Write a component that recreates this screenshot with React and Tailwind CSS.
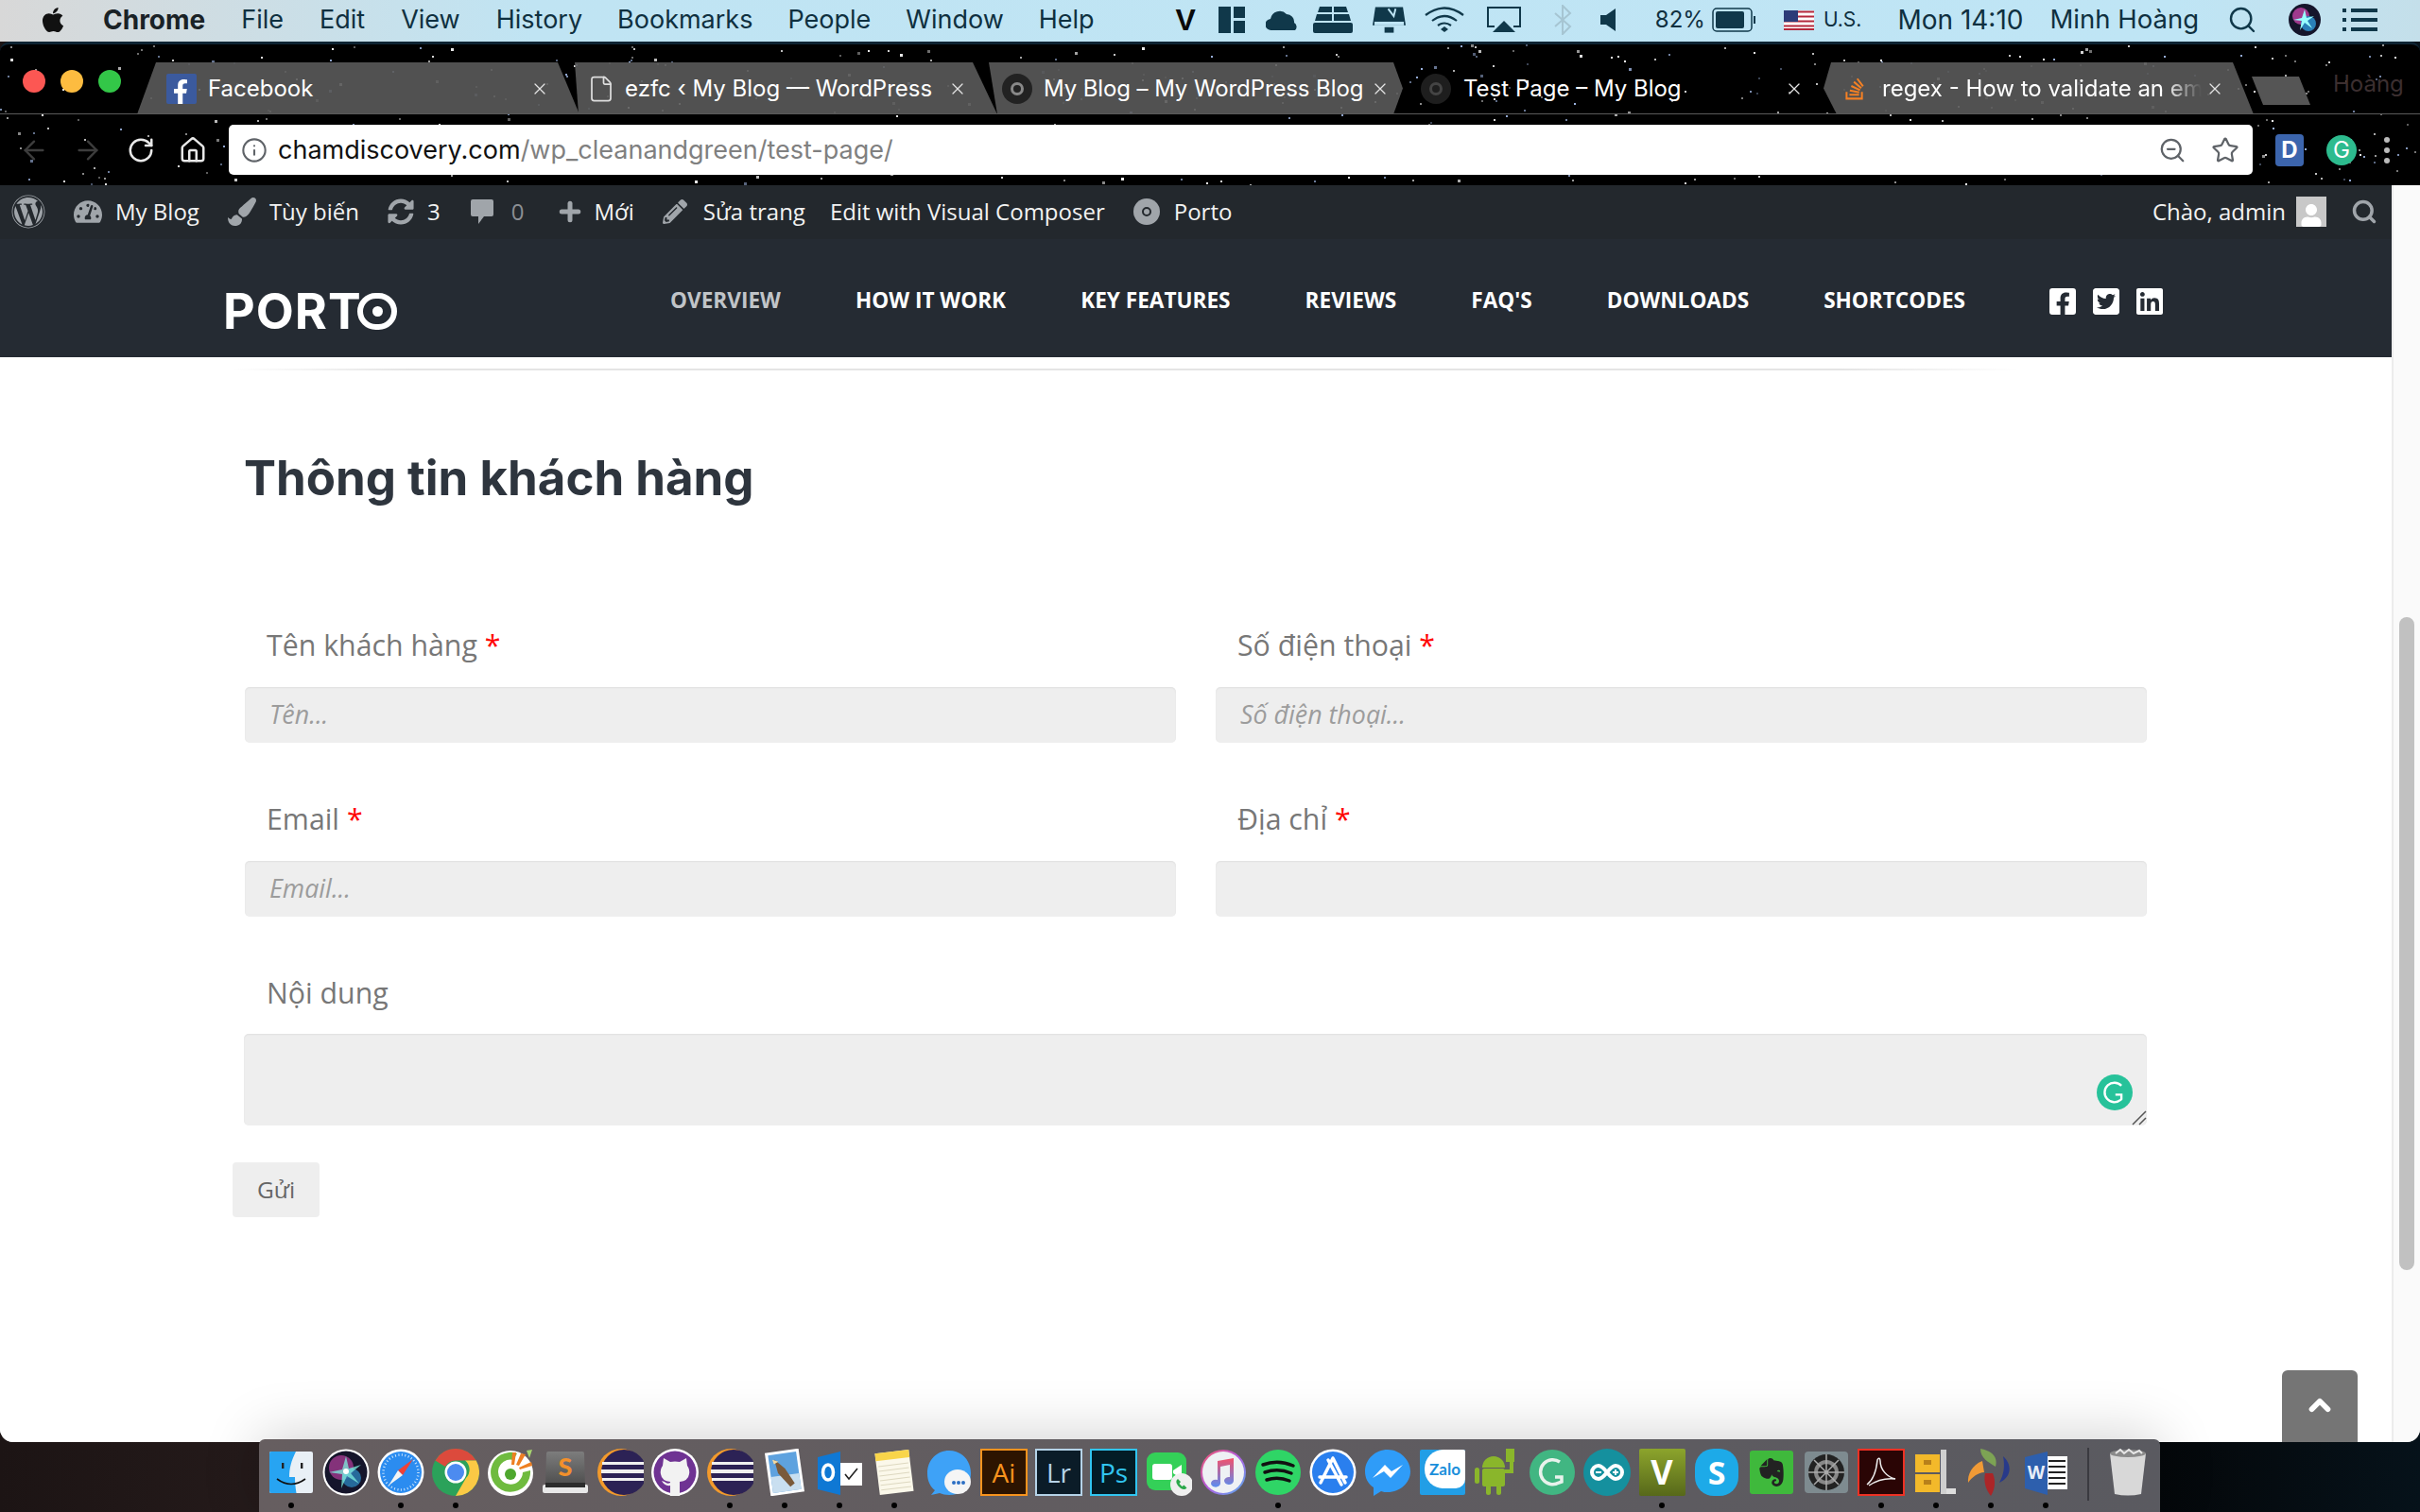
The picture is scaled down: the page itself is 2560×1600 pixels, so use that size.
import React from "react";
import { ArrowLeft, ArrowRight, RotateCw, Home, Info, ZoomOut, Star, File, X, Search, ChevronUp, Plus } from "lucide-react";
import { FaFacebookSquare, FaTwitterSquare, FaLinkedin, FaWordpress, FaApple, FaTachometerAlt, FaPaintBrush, FaSyncAlt, FaPencilAlt, FaFacebookF, FaStackOverflow, FaUser, FaEvernote } from "react-icons/fa";

const stars = (() => {
  const out = [];
  let s = 12345;
  const r = () => { s = (s * 1103515245 + 12345) & 0x7fffffff; return s / 0x7fffffff; };
  for (let i = 0; i < 520; i++) {
    out.push({ x: Math.floor(r() * 2560), y: Math.floor(r() * 149), w: r() > 0.85 ? 3 : 2, o: 0.35 + r() * 0.65, b: r() > 0.7 });
  }
  return out;
})();

const Rim = ({ fill = "#fff", r = 24 }) => <circle cx="25" cy="25" r={r} fill={fill} />;
const S = ({ children }) => <svg viewBox="0 0 50 50" className="h-[50px] w-[50px]">{children}</svg>;

const dockIcons = [
  { k: "finder", run: 1, el: <S><rect x="2" y="3" width="46" height="44" rx="2" fill="#e9f0f6" /><path d="M2 5a2 2 0 012-2h26c-5 10-7 18-7 27h6c0 6 .5 11 1.5 17H4a2 2 0 01-2-2z" fill="#27a4f2" /><rect x="15" y="15" width="2.4" height="6" fill="#222" /><rect x="35" y="15" width="2.4" height="6" fill="#222" /><path d="M10 32q15 11 30 0" fill="none" stroke="#111" strokeWidth="1.6" /></S> },
  { k: "siri", el: <S><Rim r={24.5} /><circle cx="25" cy="25" r="22.5" fill="#15152b" /><circle cx="20" cy="20" r="13" fill="#a03a8e" opacity=".8" /><circle cx="31" cy="31" r="10" fill="#2a7fb8" opacity=".8" /><path d="M25 8l3 13 13-4-11 9 9 11-13-8-6 13 1-15-14-2 14-3z" fill="#7ff0e0" opacity=".75" /><circle cx="25" cy="24" r="3" fill="#fff" /></S> },
  { k: "safari", run: 1, el: <S><Rim r={24.5} /><circle cx="25" cy="25" r="22" fill="#2b8cf0" /><circle cx="25" cy="25" r="18.5" fill="none" stroke="#cfe6fb" strokeWidth="2.5" strokeDasharray="1 2.5" /><path d="M38 11L22 23l5 5z" fill="#ef4136" /><path d="M12 39l10-16 5 5z" fill="#f4f4f4" /></S> },
  { k: "chrome", run: 1, el: <S><circle cx="25" cy="25" r="25" fill="#2ba25a" /><path d="M25 0a25 25 0 0121.7 12.5H25a12.5 12.5 0 00-11 6.5L3.4 12.4A25 25 0 0125 0z" fill="#dc4a3c" /><path d="M46.7 12.5A25 25 0 0125 50l11-19a12.5 12.5 0 00-1-18.5z" fill="#fbc945" /><circle cx="25" cy="25" r="11.5" fill="#fff" /><circle cx="25" cy="25" r="9" fill="#4c8bf0" /></S> },
  { k: "coccoc", el: <S><circle cx="25" cy="26" r="24" fill="#fff" /><path d="M32 5A21 21 0 1046 23l-8 2a13 13 0 11-10-13z" fill="#6fbb3f" /><circle cx="25" cy="27" r="9" fill="#fff" /><circle cx="25" cy="27" r="6" fill="#4ea72e" /><path d="M27 4l4 0-2 13-3 0z" fill="#ee7f22" /><path d="M36 5l5 1-7 12-3-1z" fill="#ee7f22" /><path d="M47 14l1 4-13 4-1-2z" fill="#ee7f22" /><path d="M42 2l6-1-3 9z" fill="#a7d46f" /></S> },
  { k: "sublime", el: <S><defs><linearGradient id="sb" x1="0" y1="0" x2="0" y2="1"><stop offset="0" stopColor="#7d7d7d" /><stop offset="1" stopColor="#4a4a4a" /></linearGradient></defs><rect x="1" y="38" width="48" height="9" rx="2" fill="#e8e8e8" /><path d="M5 5a2 2 0 012-2h36a2 2 0 012 2l1 36H4z" fill="url(#sb)" /><rect x="4" y="36" width="42" height="5" fill="#2c2c2c" /><text x="25" y="29" textAnchor="middle" fontFamily="Lato, sans-serif" fontWeight="900" fontSize="27" fill="#f3902b">S</text></S> },
  { k: "eclipse", el: <S><circle cx="26" cy="25" r="25" fill="#f39a2b" /><circle cx="29" cy="25" r="24" fill="#2c2255" /><path d="M6 14h46v3H6zM5 22h47v4H5zM6 31h46v3H6z" fill="#f0f0f0" /></S> },
  { k: "github", el: <S><Rim r={25} /><circle cx="25" cy="25" r="22.5" fill="#6f3393" /><path d="M13 10l7 4q5-1 10 0l7-4 1 8q3 4 2 9-1 7-10 8v15H20V39q-6 1-9-5l3 1q3 3 6 1v-1q-9-1-10-8-1-5 2-9z" fill="#f2f2f2" /></S> },
  { k: "eclipse2", run: 1, el: <S><circle cx="26" cy="25" r="25" fill="#f39a2b" /><circle cx="29" cy="25" r="24" fill="#2c2255" /><path d="M6 14h46v3H6zM5 22h47v4H5zM6 31h46v3H6z" fill="#f0f0f0" /></S> },
  { k: "mail", run: 1, el: <S><g transform="rotate(-8 25 25)"><rect x="7" y="2" width="36" height="46" fill="#fff" /><rect x="10" y="5" width="30" height="40" fill="#5ea2df" /><rect x="10" y="28" width="30" height="17" fill="#c9dff0" /><path d="M16 10l10 11 8 17-5 3-11-16z" fill="#7a5a3b" /><path d="M20 13l-6-3 1 5z" fill="#f4d9a0" /></g></S> },
  { k: "outlook", run: 1, el: <S><rect x="26" y="15" width="23" height="24" fill="#fff" /><path d="M31 27l4 5 9-11" fill="none" stroke="#222" strokeWidth="1.6" /><path d="M2 9l24-6v46L2 43z" fill="#0f78d4" /><ellipse cx="13" cy="25" rx="5.5" ry="8" fill="none" stroke="#fff" strokeWidth="3.5" /></S> },
  { k: "notes", run: 1, el: <S><g transform="rotate(-7 25 25)"><rect x="7" y="3" width="36" height="44" fill="#fbf8ea" /><rect x="7" y="3" width="36" height="8" fill="#f9d54a" /><path d="M9 17h32M9 22h32M9 27h32M9 32h32M9 37h32M9 42h32" stroke="#ddd8c0" strokeWidth="1" /></g></S> },
  { k: "messages", el: <S><path d="M25 2C12 2 2 12 2 26c0 8 3 14 8 18l-4 5 9-2c3 1 6 2 10 2 14 0 23-10 23-23S39 2 25 2z" fill="#3ea2f7" /><ellipse cx="34" cy="35" rx="14" ry="13" fill="#f5f5f5" /><path d="M28 36a2 2 0 104 0 2 2 0 10-4 0M33 36a2 2 0 104 0 2 2 0 10-4 0M38 36a2 2 0 104 0 2 2 0 10-4 0" fill="#2c6fc4" /></S> },
  { k: "ai", el: <div className="flex h-[50px] w-[50px] items-center justify-center border-[2px] border-[#f7931e] bg-[#2d1400] font-['Open_Sans',sans-serif] text-[28px] text-[#f7931e]">Ai</div> },
  { k: "lr", el: <div className="flex h-[50px] w-[50px] items-center justify-center border-[2px] border-[#b5d3e8] bg-[#0b1c28] font-['Open_Sans',sans-serif] text-[28px] text-[#b5d3e8]">Lr</div> },
  { k: "ps", el: <div className="flex h-[50px] w-[50px] items-center justify-center border-[2px] border-[#31c5f0] bg-[#031c26] font-['Open_Sans',sans-serif] text-[28px] text-[#31c5f0]">Ps</div> },
  { k: "facetime", el: <S><rect x="2" y="4" width="42" height="40" rx="9" fill="#34d058" /><rect x="8" y="16" width="21" height="17" rx="3" fill="#fff" /><path d="M30 23l9-6v15l-9-6z" fill="#fff" /><circle cx="39" cy="38" r="12" fill="#efefef" /><path d="M35 32l3 3-1.5 2 3 3 2-1.5 3 3c-3 3-6 1-8-1s-5-6-1.5-8.5z" fill="#2ba84a" /></S> },
  { k: "itunes", el: <S><defs><linearGradient id="it" x1="0" y1="0" x2="1" y2="1"><stop offset="0" stopColor="#f5566a" /><stop offset=".5" stopColor="#b25ce0" /><stop offset="1" stopColor="#4fb4f0" /></linearGradient><linearGradient id="it2" x1="0" y1="0" x2="0" y2="1"><stop offset="0" stopColor="#f3516c" /><stop offset="1" stopColor="#5a8cf0" /></linearGradient></defs><circle cx="25" cy="25" r="24" fill="url(#it)" /><circle cx="25" cy="25" r="22" fill="#eef1f4" /><path d="M19 13l17-3v24a5 4 0 11-4-4V17l-10 2v18a5 4 0 11-3-4z" fill="url(#it2)" /></S> },
  { k: "spotify", run: 1, el: <S><circle cx="25" cy="25" r="24" fill="#2fd566" /><path d="M9 17q16-6 32 1M11 25q14-5 28 1M13 33q12-4 24 1" fill="none" stroke="#111" strokeWidth="3.5" strokeLinecap="round" /></S> },
  { k: "appstore", el: <S><Rim r={24.5} /><circle cx="25" cy="25" r="22" fill="#2a7fee" /><path d="M25 10l-13 26M25 10l13 26M20 12l14 26M11 30h28" stroke="#fff" strokeWidth="3.5" strokeLinecap="round" fill="none" /></S> },
  { k: "messenger", el: <S><path d="M25 1C12 1 1 11 1 24c0 7 3 13 9 17v9l8-5c2 1 5 1 7 1 13 0 24-10 24-22S38 1 25 1z" fill="#2f9cf8" /><path d="M9 31l13-14 7 7 12-7-13 14-7-7z" fill="#fff" /></S> },
  { k: "zalo", el: <div className="relative h-[48px] w-[48px] rounded-[2px] bg-[#229ee6]"><div className="absolute left-[5px] top-0 flex h-[41px] w-[43px] items-center justify-center rounded-bl-[20px] rounded-tl-[20px] rounded-tr-[2px] rounded-br-[10px] bg-white font-['Lato',sans-serif] text-[17px] font-bold text-[#1b8fdb]">Zalo</div></div> },
  { k: "android", el: <S><rect x="1" y="20" width="5" height="17" rx="2.5" fill="#8ab62b" /><path d="M9 20a12 12 0 0124 0z" fill="#8ab62b" /><rect x="9" y="21" width="24" height="19" rx="2" fill="#8ab62b" /><rect x="13" y="38" width="5" height="11" rx="2.5" fill="#8ab62b" /><rect x="24" y="38" width="5" height="11" rx="2.5" fill="#8ab62b" /><path d="M33 24h7V12" stroke="#8ab62b" strokeWidth="4" fill="none" /><rect x="34" y="0" width="9" height="14" fill="#8ab62b" /></S> },
  { k: "grammarly", el: <S><circle cx="25" cy="25" r="24" fill="#41b682" /><path d="M33 14a13 13 0 10-1 22l3-1v-5h-7" fill="none" stroke="#e8f2ec" strokeWidth="3.5" /></S> },
  { k: "arduino", el: <S><circle cx="25" cy="25" r="25" fill="#15909e" /><path d="M16 18a7 7 0 000 14c7 0 11-14 18-14a7 7 0 010 14c-7 0-11-14-18-14z" fill="none" stroke="#fff" strokeWidth="4" /><path d="M13 25h6M31 25h6M34 22v6" stroke="#fff" strokeWidth="1.8" /></S> },
  { k: "vim", run: 1, el: <div className="flex h-[50px] w-[49px] items-center justify-center rounded-[2px] bg-[linear-gradient(180deg,#8ca42c,#57681a)] font-['Open_Sans',sans-serif] text-[36px] font-bold text-white">V</div> },
  { k: "skype", el: <div className="flex h-[50px] w-[46px] items-center justify-center rounded-[20px] bg-[#1daae8] font-['Open_Sans',sans-serif] text-[34px] font-bold text-white">S</div> },
  { k: "evernote", el: <div className="flex h-[46px] w-[46px] items-center justify-center rounded-[3px] bg-[#3fb93c] text-[34px] text-[#222]"><FaEvernote /></div> },
  { k: "sysprefs", el: <S><rect x="2" y="3" width="46" height="44" rx="4" fill="#7e8b90" /><circle cx="25" cy="25" r="19" fill="#222" /><circle cx="25" cy="25" r="13" fill="#888" /><circle cx="25" cy="25" r="9" fill="#222" /><path d="M25 6v38M6 25h38M12 12l26 26M38 12L12 38" stroke="#aaa" strokeWidth="1.5" /></S> },
  { k: "acrobat", run: 1, el: <S><rect x="1" y="1" width="48" height="48" fill="#2a0505" stroke="#ee3124" strokeWidth="2" /><path d="M10 38c8-6 10-16 11-26 1-3 3-2 3 1 0 9 7 17 16 19-9-1-19 1-28 7" fill="none" stroke="#eee" strokeWidth="1.5" /></S> },
  { k: "archive", run: 1, el: <S><rect x="3" y="6" width="26" height="19" fill="#f3b92a" /><rect x="3" y="27" width="26" height="19" fill="#f3b92a" /><rect x="12" y="12" width="8" height="5" fill="#b8801a" /><rect x="12" y="33" width="8" height="5" fill="#b8801a" /><rect x="30" y="1" width="6" height="47" fill="#cfcfcf" /><rect x="36" y="42" width="10" height="6" fill="#ddd" /></S> },
  { k: "stack", run: 1, el: <S><path d="M14 0c12 2 19 9 16 19C22 14 14 10 14 0z" fill="#7da354" /><path d="M38 8c10 9 9 22-4 28 5-9 6-18 4-28z" fill="#283a8a" /><path d="M16 13C5 17 0 28 1 36c4-6 11-11 17-11z" fill="#f09a36" /><path d="M19 26c-2 9 1 18 6 24 5-8 5-17 2-24z" fill="#ab2527" /></S> },
  { k: "word", run: 1, el: <S><rect x="25" y="8" width="23" height="35" fill="#fff" /><path d="M28 13h18M28 19h18M28 25h18M28 31h18M28 37h18" stroke="#222" strokeWidth="2" /><path d="M3 9l24-6v46L3 42z" fill="#2d5fad" /><text x="15" y="32" textAnchor="middle" fontFamily="Open Sans, sans-serif" fontWeight="700" fontSize="19" fill="#e8eef8">W</text></S> },
];

function Tab({ widthCls, shapeCls, fill = "bg-[#5a5a5a]/90", icon, title, closeCls, titleCls }) {
  return (
    <div className={`relative flex h-full items-center text-[24px] text-white ${widthCls} ${shapeCls} ${fill}`}>
      {icon}
      <span className={`overflow-hidden whitespace-nowrap ${titleCls}`}>{title}</span>
      <X size={20} strokeWidth={1.5} className={`shrink-0 text-[#e4e4e4] ${closeCls}`} />
    </div>
  );
}

function AdminItem({ icon, children, cls = "" }) {
  return <div className={`flex items-center ${cls}`}>{icon}{children}</div>;
}

function Field({ label, required, placeholder }) {
  return (
    <div>
      <div className="h-[40px] pl-[23px] text-[30.3px] leading-[40px] text-[#777777]">
        {label}{required && <span className="text-[#ff0000]"> *</span>}
      </div>
      <input readOnly placeholder={placeholder} className="mt-[24px] h-[59px] w-full rounded-[5px] bg-[#eeeeee] px-[26px] pb-[2px] text-[26.8px] shadow-[inset_0_1px_2px_rgba(0,0,0,0.06)] outline-none placeholder:italic placeholder:text-[#9c9c9c]" />
    </div>
  );
}

export default function App() {
  return (
    <div className="relative flex h-[1600px] w-[2560px] flex-col overflow-hidden bg-[linear-gradient(90deg,#1c1414_0%,#241a1a_10%,#040608_88%,#06121a_100%)]">
      {/* macOS menu bar */}
      <header className="flex h-[44px] shrink-0 items-center bg-[linear-gradient(90deg,#d8d8d8_0%,#c0e4f3_22%,#bfe5f5_90%,#c4dfea_100%)] pb-[2px] font-['Inter',sans-serif] text-[27px] text-[#0f3040]">
        <FaApple className="ml-[41px] text-[30px] text-[#111]" />
        <span className="ml-[38px] text-[28px] font-bold text-[#1a2226]">Chrome</span>
        <span className="ml-[38px]">File</span>
        <span className="ml-[38px]">Edit</span>
        <span className="ml-[38px]">View</span>
        <span className="ml-[38px]">History</span>
        <span className="ml-[37px]">Bookmarks</span>
        <span className="ml-[37px]">People</span>
        <span className="ml-[37px]">Window</span>
        <span className="ml-[37px]">Help</span>
        <div className="ml-auto flex items-center pr-[45px]">
          <span className="font-['Liberation_Sans',sans-serif] text-[32px] font-bold text-[#0a0a0a]">V</span>
          <svg viewBox="0 0 28 28" className="ml-[24px] h-[28px] w-[28px]" fill="#10384a"><rect width="13" height="28" /><rect x="16" width="12" height="12" /><rect x="16" y="15" width="12" height="13" /></svg>
          <svg viewBox="0 0 36 24" className="ml-[22px] h-[24px] w-[36px]" fill="#10384a"><path d="M6 23a6 6 0 01-1-12 10 10 0 0117-5 8 8 0 018 9 5 5 0 011 8z" /></svg>
          <svg viewBox="0 0 42 28" className="ml-[14px] h-[28px] w-[42px]" fill="#10384a"><path d="M7 0h13v6H5zM22 0h13l2 6H22zM4 8h16v7H2zM22 8h16l2 7H22z" /><rect y="17" width="42" height="11" rx="2" /></svg>
          <svg viewBox="0 0 36 28" className="ml-[21px] h-[28px] w-[35px]" fill="#10384a"><path d="M3 0h30l3 20H0z" /><rect x="2" y="16" width="32" height="4" fill="#bfe5f5" /><rect x="13" y="22" width="10" height="6" /><path d="M17 2l6 8 2-8" stroke="#bfe5f5" strokeWidth="2" fill="none" /></svg>
          <svg viewBox="0 0 42 28" className="ml-[20px] h-[28px] w-[42px]" fill="none" stroke="#10384a" strokeWidth="2.2"><path d="M1 9q20-15 40 0M8 15q13-10 26 0M14 20q7-5 14 0" /><path d="M17 24l4-3 4 3-4 3z" fill="#10384a" stroke="none" /></svg>
          <svg viewBox="0 0 36 28" className="ml-[24px] h-[28px] w-[36px]" fill="none" stroke="#10384a" strokeWidth="2"><path d="M8 21H1V1h34v20h-7" /><path d="M18 15l12 12H6z" fill="#10384a" stroke="none" /></svg>
          <svg viewBox="0 0 20 32" className="ml-[34px] h-[32px] w-[20px]" fill="none" stroke="#a6c5d2" strokeWidth="2"><path d="M2 9l16 14-8 8V1l8 8L2 23" /></svg>
          <svg viewBox="0 0 16 24" className="ml-[30px] h-[24px] w-[16px]" fill="#10384a"><path d="M0 7h6l10-7v24L6 17H0z" /></svg>
          <span className="ml-[42px] text-[24px]">82%</span>
          <svg viewBox="0 0 47 26" className="ml-[7px] h-[26px] w-[47px]" fill="#10384a"><rect x="1" y="1" width="41" height="24" rx="4" fill="none" stroke="#10384a" strokeWidth="1.5" /><rect x="4" y="4" width="30" height="18" rx="2" /><rect x="44" y="9" width="2" height="8" /></svg>
          <svg viewBox="0 0 32 21" className="ml-[29px] h-[21px] w-[32px]"><rect width="32" height="21" fill="#fff" /><path d="M0 1.5h32M0 6.5h32M0 11.5h32M0 16.5h32M0 20h32" stroke="#b3283c" strokeWidth="2" /><rect width="15" height="12" fill="#2c3b78" /></svg>
          <span className="ml-[10px] text-[21px]">U.S.</span>
          <span className="ml-[38px] text-[28px]">Mon 14:10</span>
          <span className="ml-[28px] text-[27.5px]">Minh Hoàng</span>
          <Search size={32} strokeWidth={1.8} className="ml-[30px] text-[#10384a]" />
          <svg viewBox="0 0 34 34" className="ml-[33px] h-[34px] w-[34px]"><circle cx="17" cy="17" r="17" fill="#15152b" /><circle cx="13" cy="13" r="9" fill="#a03a8e" /><circle cx="21" cy="21" r="8" fill="#2a7fb8" /><path d="M17 6l2 9 8-2-7 5 5 8-8-6-5 8 2-10-9-1 9-2z" fill="#9ff" /></svg>
          <svg viewBox="0 0 37 24" className="ml-[23px] h-[24px] w-[37px]" fill="#10384a"><rect width="4" height="4" /><rect y="10" width="4" height="4" /><rect y="20" width="4" height="4" /><rect x="9" width="28" height="4" /><rect x="9" y="10" width="28" height="4" /><rect x="9" y="20" width="28" height="4" /></svg>
        </div>
      </header>

      {/* browser window */}
      <div className="relative flex h-[1482px] shrink-0 flex-col overflow-hidden rounded-b-[14px] rounded-t-[10px] border-t-[3px] border-[#0e2433] bg-black">
        <svg className="absolute left-0 top-0 h-[149px] w-[2560px]" viewBox="0 0 2560 149">
          {stars.map((d, i) => <rect key={i} x={d.x} y={d.y} width={d.w} height={d.w} fill={d.b ? "#9db4e0" : "#ffffff"} opacity={d.o} />)}
        </svg>

        {/* tab strip */}
        <div className="relative flex h-[74px] shrink-0 border-b border-[#5a5a5a] pt-[19px] font-['Inter',sans-serif]">
          <div className="absolute left-[24px] top-[27px] flex gap-[16px]">
            <span className="h-[24px] w-[24px] rounded-full bg-[#fc5753]" />
            <span className="h-[24px] w-[24px] rounded-full bg-[#fdbc40]" />
            <span className="h-[24px] w-[24px] rounded-full bg-[#33c748]" />
          </div>
          <div className="absolute left-[2468px] top-[26px] text-[24px] leading-[32px] text-[#3c2f30]">Hoàng</div>
          <div className="ml-[145px] flex h-[55px]">
            <Tab widthCls="w-[468px]" shapeCls="[clip-path:polygon(20px_0,445px_0,100%_100%,0_100%)]" closeCls="ml-[-10px] mr-[32px]" titleCls="ml-[12px] flex-1"
              icon={<div className="ml-[31px] flex h-[32px] w-[32px] items-end justify-end rounded-[2px] bg-[#3b5a9e] pr-[4px] text-[26px] text-white"><FaFacebookF /></div>} title="Facebook" />
            <Tab widthCls="ml-[-5px] w-[447px]" shapeCls="[clip-path:polygon(0_0,421px_0,100%_100%,4px_100%)]" closeCls="ml-[-4px] mr-[32px]" titleCls="ml-[10px] flex-1"
              icon={<File size={30} strokeWidth={1.4} className="ml-[13px] shrink-0 text-[#dddddd]" />} title="ezfc ‹ My Blog — WordPress" />
            <Tab widthCls="ml-[-9px] w-[438px]" shapeCls="[clip-path:polygon(0_0,428px_0,100%_50%,428px_100%,9px_100%)]" closeCls="ml-[-4px] mr-[14px]" titleCls="ml-[12px] flex-1 tracking-[-0.1px]"
              icon={<div className="ml-[14px] flex h-[32px] w-[32px] shrink-0 items-center justify-center rounded-full bg-[#222222]"><div className="h-[14px] w-[14px] rounded-full border-[3px] border-[#888888]" /></div>} title="My Blog – My WordPress Blog" />
            <Tab widthCls="w-[445px]" shapeCls="" fill="bg-transparent" closeCls="mr-[21px]" titleCls="ml-[13px] flex-1"
              icon={<div className="ml-[19px] flex h-[32px] w-[32px] shrink-0 items-center justify-center rounded-full bg-[#1e1e1e]"><div className="h-[14px] w-[14px] rounded-full border-[3px] border-[#444444]" /></div>} title="Test Page – My Blog" />
            <Tab widthCls="w-[455px]" shapeCls="[clip-path:polygon(8px_0,433px_0,100%_100%,14px_100%,0_50%)]" closeCls="ml-[4px] mr-[31px]" titleCls="ml-[16px] w-[338px] [mask-image:linear-gradient(90deg,#000_88%,transparent)]"
              icon={<FaStackOverflow className="ml-[20px] shrink-0 text-[26px] text-[#f48024]" />} title="regex - How to validate an email" />
            <div className="ml-[-2px] mt-[15px] h-[30px] w-[62px] bg-[#555555] [clip-path:polygon(0_0,50px_0,100%_100%,12px_100%)]" />
          </div>
        </div>

        {/* toolbar */}
        <div className="relative flex h-[75px] shrink-0 items-center font-['Inter',sans-serif]">
          <ArrowLeft size={32} strokeWidth={1.8} className="ml-[20px] text-[#3d3d3d]" />
          <ArrowRight size={32} strokeWidth={1.8} className="ml-[25px] text-[#3d3d3d]" />
          <RotateCw size={30} strokeWidth={2} className="ml-[25px] text-[#e8e8e8]" />
          <Home size={30} strokeWidth={2} className="ml-[25px] text-[#e8e8e8]" />
          <div className="ml-[23px] flex h-[53px] w-[2141px] items-center rounded-[5px] bg-white">
            <Info size={28} strokeWidth={1.8} className="ml-[13px] text-[#5f6368]" />
            <span className="ml-[11px] whitespace-nowrap pt-[2px] text-[27px] text-[#111111]">chamdiscovery.com<span className="text-[#808080]">/wp_cleanandgreen/test-page/</span></span>
            <ZoomOut size={30} strokeWidth={1.8} className="ml-auto mr-[2px] text-[#5f6368]" />
            <Star size={30} strokeWidth={1.8} className="ml-[24px] mr-[14px] text-[#5f6368]" />
          </div>
          <div className="ml-[24px] flex h-[34px] w-[30px] items-center justify-center rounded-[4px] bg-[#3c65ad] text-[24px] font-bold text-white">D</div>
          <div className="ml-[24px] flex h-[32px] w-[32px] items-center justify-center rounded-full bg-[#2dbb8e] text-[24px] text-white">G</div>
          <svg viewBox="0 0 6 28" className="ml-[29px] h-[28px] w-[6px]" fill="#bbbbbb"><circle cx="3" cy="3" r="3" /><circle cx="3" cy="14" r="3" /><circle cx="3" cy="25" r="3" /></svg>
        </div>

        {/* web page */}
        <div className="relative flex min-h-0 flex-1 bg-white">
          <div className="relative flex min-w-0 flex-1 flex-col">
            <div className="flex h-[57px] shrink-0 items-center bg-[#23282d] pb-[2px] font-['Open_Sans',sans-serif] text-[24px] text-[#f2f2f2]">
              <FaWordpress className="ml-[12px] text-[36px] text-[#a0a5aa]" />
              <AdminItem cls="ml-[30px]" icon={<FaTachometerAlt className="text-[30px] text-[#a0a5aa]" />}><span className="ml-[14px]">My Blog</span></AdminItem>
              <AdminItem cls="ml-[30px]" icon={<FaPaintBrush className="text-[30px] text-[#a0a5aa]" />}><span className="ml-[14px]">Tùy biến</span></AdminItem>
              <AdminItem cls="ml-[30px]" icon={<FaSyncAlt className="text-[28px] text-[#a0a5aa]" />}><span className="ml-[14px]">3</span></AdminItem>
              <AdminItem cls="ml-[31px]" icon={<svg viewBox="0 0 26 28" className="h-[28px] w-[26px]" fill="#a0a5aa"><path d="M3 1h20a2 2 0 012 2v14a2 2 0 01-2 2h-8l-6 8v-8H3a2 2 0 01-2-2V3a2 2 0 012-2z" /></svg>}><span className="ml-[18px] text-[#8c8f94]">0</span></AdminItem>
              <AdminItem cls="ml-[34px]" icon={<Plus size={30} strokeWidth={4} className="text-[#a0a5aa]" />}><span className="ml-[10px]">Mới</span></AdminItem>
              <AdminItem cls="ml-[30px]" icon={<FaPencilAlt className="text-[26px] text-[#a0a5aa]" />}><span className="ml-[17px]">Sửa trang</span></AdminItem>
              <span className="ml-[26px]">Edit with Visual Composer</span>
              <AdminItem cls="ml-[30px]" icon={<div className="flex h-[28px] w-[28px] items-center justify-center rounded-full bg-[#a0a5aa]"><div className="h-[10px] w-[10px] rounded-full border-[2px] border-[#23282d]" /></div>}><span className="ml-[15px]">Porto</span></AdminItem>
              <span className="ml-auto">Chào, admin</span>
              <div className="ml-[11px] flex h-[32px] w-[32px] items-end justify-center overflow-hidden bg-[#c8c8c8] text-[24px] text-white"><FaUser /></div>
              <Search size={28} strokeWidth={3} className="ml-[26px] mr-[15px] text-[#a0a5aa]" />
            </div>

            <div className="flex h-[125px] shrink-0 bg-[#252b33] font-['Open_Sans',sans-serif] text-[22.6px] font-bold text-white">
              <div className="relative ml-[236px] mt-[47px] h-[60px] font-['Inter',sans-serif] text-[52px] leading-[60px] font-bold tracking-[1px]">PORT<span className="text-transparent">O</span><span className="absolute right-[2px] top-[10px] flex h-[39px] w-[42px] items-center justify-center rounded-full border-[6px] border-white"><span className="h-[11px] w-[11px] rounded-full bg-white" /></span></div>
              <nav className="ml-[287px] mt-[49px] flex h-[32px] gap-[79px] uppercase leading-[32px]">
                <span className="text-[#c0c4c8]">Overview</span>
                <span>How it work</span>
                <span>Key features</span>
                <span>Reviews</span>
                <span>FAQ's</span>
                <span>Downloads</span>
                <span>Shortcodes</span>
              </nav>
              <div className="ml-[87px] mt-[50px] flex h-[32px] gap-[14px] text-[32px] text-white">
                <FaFacebookSquare /><FaTwitterSquare /><FaLinkedin />
              </div>
            </div>

            <main className="relative flex-1 bg-white pl-[259px] pr-[260px] font-['Open_Sans',sans-serif]">
              <div className="-ml-[14px] mt-[12px] h-[2px] w-[1890px] bg-[linear-gradient(90deg,#ffffff,#e4e4e4_10%,#e4e4e4_90%,#ffffff)]" />
              <h1 className="-ml-[1px] mt-[79px] h-[70px] font-['Inter',sans-serif] text-[51px] leading-[70px] font-bold text-[#2e353e]">Thông tin khách hàng</h1>
              <div className="mt-[122px] grid grid-cols-[985px_985px] gap-x-[42px] gap-y-[61px]">
                <Field label="Tên khách hàng" required placeholder="Tên..." />
                <Field label="Số điện thoại" required placeholder="Số điện thoại..." />
                <Field label="Email" required placeholder="Email..." />
                <Field label="Địa chỉ" required />
              </div>
              <div className="mt-[61px] h-[40px] pl-[23px] text-[30.3px] leading-[40px] text-[#777777]">Nội dung</div>
              <div className="relative -ml-[1px] mt-[23px] h-[97px] w-[2013px] rounded-[5px] bg-[#eeeeee] shadow-[inset_0_1px_2px_rgba(0,0,0,0.06)]">
                <svg viewBox="0 0 48 48" className="absolute right-[15px] top-[43px] h-[38px] w-[38px]"><circle cx="24" cy="24" r="24" fill="#27c29a" /><path d="M33 15a13 13 0 10-1 19l1-1v-6h-8" fill="none" stroke="#fff" strokeWidth="3" /></svg>
                <svg viewBox="0 0 16 16" className="absolute bottom-0 right-0 h-[16px] w-[16px]"><path d="M1 15L15 1M8 15l7-7" stroke="#555" strokeWidth="1.5" /></svg>
              </div>
              <button className="-ml-[13px] mt-[39px] flex h-[58px] w-[92px] items-center justify-center rounded-[4px] bg-[#eeeeee] text-[24.5px] text-[#666666]">Gửi</button>
              <div className="absolute bottom-0 right-[36px] flex h-[76px] w-[80px] items-start justify-center rounded-t-[6px] bg-[#757575] pt-[20px]">
                <ChevronUp size={34} strokeWidth={4} className="text-white" />
              </div>
            </main>
          </div>
          <aside className="w-[30px] shrink-0 border-l-[2px] border-[#ececec] bg-[#fafafa] pl-[6px] pt-[457px]">
            <div className="h-[691px] w-[16px] rounded-full bg-[#c1c1c1]" />
          </aside>
        </div>
      </div>

      {/* dock */}
      <div className="absolute bottom-0 left-[274px] flex h-[77px] w-[2011px] rounded-t-[6px] bg-[linear-gradient(90deg,#665e60,#5a5a60)] pl-[5px] pt-[10px] shadow-[0_-4px_60px_rgba(0,0,0,0.18)]">
        {dockIcons.map((ic) => (
          <div key={ic.k} className="relative flex h-[50px] w-[58px] shrink-0 items-center justify-center">
            {ic.el}
            {ic.run && <span className="absolute left-[26px] top-[57px] h-[6px] w-[6px] rounded-full bg-black" />}
          </div>
        ))}
        <div className="ml-[15px] mt-[-1px] h-[56px] w-[2px] bg-[#3a3a40]" />
        <div className="ml-[20px] flex h-[50px] w-[42px] items-center justify-center">
          <svg viewBox="0 0 42 50" className="h-[50px] w-[42px]"><path d="M2 5l5 43q14 3 28 0l5-43z" fill="#d8d8d8" /><ellipse cx="21" cy="5" rx="19" ry="4" fill="#8a8a8a" /><path d="M8 5l5-4 4 4 5-4 5 4 6-3 3 3" stroke="#e6e6e6" strokeWidth="2" fill="none" /></svg>
        </div>
      </div>
    </div>
  );
}
